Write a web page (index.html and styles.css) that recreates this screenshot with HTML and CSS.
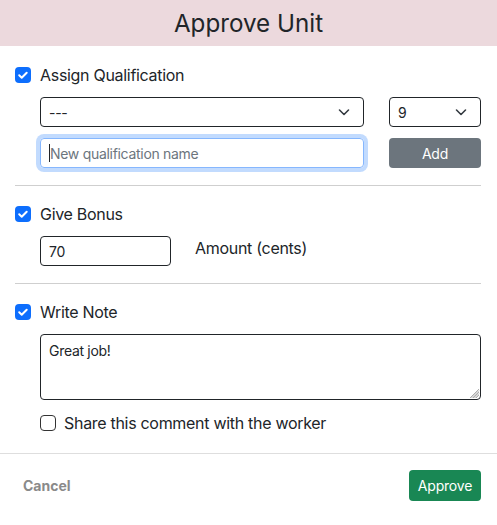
FILE: index.html
```html
<!DOCTYPE html>
<html>
<head>
<meta charset="utf-8">
<link rel="stylesheet" href="styles.css">
</head>
<body>
<div class="modal">
  <header class="head"><h1>Approve Unit</h1></header>
  <div class="content">
    <section class="sec sec1">
      <label class="check-row"><span class="cb on"><svg viewBox="0 0 16 16" width="16" height="16"><path d="M4.2 8.3l2.5 2.4 5-5" fill="none" stroke="#fff" stroke-width="2" stroke-linecap="round" stroke-linejoin="round"/></svg></span><span>Assign Qualification</span></label>
      <div class="qual-grid">
        <div class="sel"><span>---</span><svg viewBox="0 0 16 16" width="16" height="16"><path d="M3.5 6l4.5 4.5L12.5 6" fill="none" stroke="#343a40" stroke-width="1.6" stroke-linecap="round" stroke-linejoin="round"/></svg></div>
        <div class="sel"><span>9</span><svg viewBox="0 0 16 16" width="16" height="16"><path d="M3.5 6l4.5 4.5L12.5 6" fill="none" stroke="#343a40" stroke-width="1.6" stroke-linecap="round" stroke-linejoin="round"/></svg></div>
        <div class="field focus"><span class="caret"></span><span class="ph">New qualification name</span></div>
        <button class="btn gray">Add</button>
      </div>
    </section>
    <section class="sec sec2">
      <label class="check-row"><span class="cb on"><svg viewBox="0 0 16 16" width="16" height="16"><path d="M4.2 8.3l2.5 2.4 5-5" fill="none" stroke="#fff" stroke-width="2" stroke-linecap="round" stroke-linejoin="round"/></svg></span><span>Give Bonus</span></label>
      <div class="bonus-row">
        <div class="field bonus"><span>70</span></div>
        <span class="amt">Amount (cents)</span>
      </div>
    </section>
    <section class="sec sec3">
      <label class="check-row"><span class="cb on"><svg viewBox="0 0 16 16" width="16" height="16"><path d="M4.2 8.3l2.5 2.4 5-5" fill="none" stroke="#fff" stroke-width="2" stroke-linecap="round" stroke-linejoin="round"/></svg></span><span>Write Note</span></label>
      <div class="note-wrap">
        <textarea class="note">Great job!</textarea>
        <svg class="grip" viewBox="0 0 12 12" width="12" height="12"><path d="M11 2L2 11M11 5L5 11M11 8L8 11M11 3.5L3.5 11M11 6.5L6.5 11" stroke="#9a9a9a" stroke-width="0.8" fill="none"/></svg>
      </div>
      <label class="check-row share"><span class="cb off"></span><span>Share this comment with the worker</span></label>
    </section>
  </div>
  <footer class="foot">
    <button class="btn link">Cancel</button>
    <button class="btn green">Approve</button>
  </footer>
</div>
</body>
</html>
```
FILE: styles.css
```css
* { box-sizing: border-box; }
body {
  margin: 0;
  font-family: Inter, "Noto Sans", sans-serif;
  color: #212529;
  background: #fff;
  letter-spacing: -0.3px;
}
.head {
  height: 46px;
  background: #ecd9dd;
  display: flex;
  align-items: center;
  justify-content: center;
}
.head h1 {
  margin: 0;
  font-size: 24.2px;
  font-weight: 400;
  letter-spacing: 0;
  color: #212529;
}
.content {
  padding: 0 16px 0 15px;
}
.sec {
  border-bottom: 1px solid #cfcfcf;
}
.sec3 { border-bottom: none; }
.sec1 { padding: 17px 0 17px; }
.sec2 { padding: 16px 0 17px; }
.sec3 { padding: 16px 0 18px; }
.check-row {
  display: flex;
  align-items: center;
  gap: 9px;
  font-size: 16px;
  line-height: 24px;
  height: 24px;
}
.cb {
  width: 16px;
  height: 16px;
  border-radius: 4px;
  flex: none;
  display: block;
}
.cb svg { display: block; }
.cb.on { background: #0d6efd; }
.cb.off { border: 1px solid #333; background: #fff; }
.qual-grid {
  margin: 10px 0 0 25px;
  display: grid;
  grid-template-columns: 324px 92px;
  column-gap: 25px;
  row-gap: 11px;
}
.sel {
  height: 30px;
  border: 1px solid #212529;
  border-radius: 4px;
  display: flex;
  align-items: center;
  justify-content: space-between;
  padding: 0 11px 0 8px;
  font-size: 14px;
}
.field {
  height: 30px;
  border: 1px solid #212529;
  border-radius: 4px;
  display: flex;
  align-items: center;
  padding: 0 8px;
  font-size: 14px;
}
.field.focus {
  border-color: #86b7fe;
  box-shadow: 0 0 0 4px rgba(13, 110, 253, 0.25);
}
.caret {
  width: 1px;
  height: 18px;
  background: #212529;
}
.ph { color: #6c757d; }
.btn {
  font-family: inherit;
  font-size: 14px;
  letter-spacing: -0.2px;
  border: none;
  border-radius: 4px;
  height: 30px;
  padding: 0 10px;
  cursor: pointer;
}
.btn.gray { background: #6c757d; color: #fff; }
.bonus-row {
  margin: 10px 0 0 25px;
  display: flex;
  align-items: center;
  gap: 24px;
}
.field.bonus { width: 131px; }
.amt { font-size: 16px; margin-top: -6px; }
.note-wrap {
  position: relative;
  margin: 10px 0 0 25px;
  width: 441px;
}
.note {
  display: block;
  width: 441px;
  height: 66px;
  border: 1px solid #212529;
  border-radius: 4px;
  padding: 7px 8px;
  font-family: inherit;
  font-size: 14px;
  letter-spacing: -0.3px;
  color: #212529;
  resize: none;
}
.grip {
  position: absolute;
  right: 1px;
  bottom: 1px;
}
.share {
  margin: 11px 0 0 25px;
  gap: 8px;
}
.foot {
  border-top: 1px solid #dedede;
  display: flex;
  justify-content: space-between;
  align-items: center;
  padding: 16px 16px 17px 13px;
}
.btn.link {
  background: none;
  color: #8a8a8a;
  font-weight: 700;
  letter-spacing: 0;
}
.btn.green {
  background: #198754;
  color: #fff;
  height: 31px;
  width: 72px;
  padding: 0;
}
```
